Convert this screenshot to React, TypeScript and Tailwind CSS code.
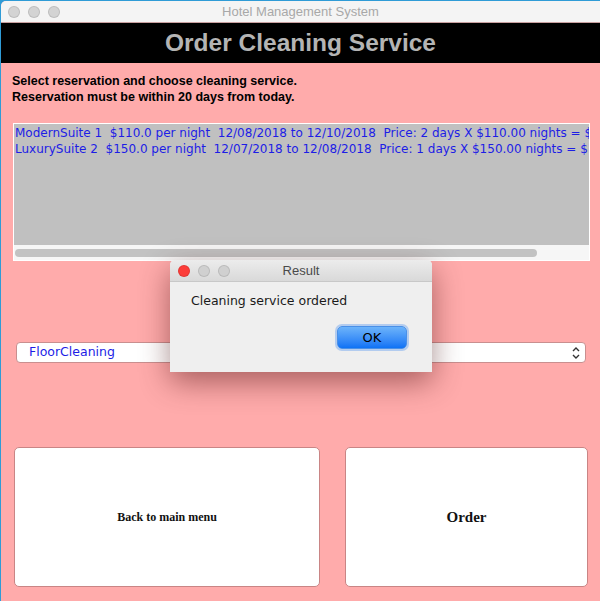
const rows = [
  "ModernSuite 1  $110.0 per night  12/08/2018 to 12/10/2018  Price: 2 days X $110.00 nights = $220.00",
  "LuxurySuite 2  $150.0 per night  12/07/2018 to 12/08/2018  Price: 1 days X $150.00 nights = $150.00",
];

const Light = ({ color }: { color: string }) => (
  <div className={`h-[12px] w-[12px] rounded-full border border-black/10 ${color}`} />
);

const App = () => {
  return (
    <div className="relative h-[601px] w-[600px] overflow-hidden bg-[#2f9bd6] pl-[1px] pt-[1px] font-['Liberation_Sans',sans-serif]">
      <div className="flex h-full flex-col overflow-hidden rounded-tl-[5px] bg-[#ffabab]">
        {/* title bar */}
        <div className="relative flex h-[22px] items-center border-b border-[#c9a0a0] bg-[#f4f4f4] px-[7px]">
          <div className="flex gap-[8px]">
            <Light color="bg-[#d3d3d3]" />
            <Light color="bg-[#d3d3d3]" />
            <Light color="bg-[#d3d3d3]" />
          </div>
          <span className="absolute left-0 right-0 text-center text-[13px] text-[#a8a8a8]">
            Hotel Management System
          </span>
        </div>
        <div className="flex h-[40px] items-center justify-center bg-black">
          <h1 className="text-[24.5px] font-bold text-[#b4b4b4]">Order Cleaning Service</h1>
        </div>

        <div className="flex flex-col px-[11px] pt-[10px]">
          <p className="text-[12.5px] font-bold leading-[16px] text-black">
            Select reservation and choose cleaning service.
            <br />
            Reservation must be within 20 days from today.
          </p>

          <div className="mt-[18px] ml-[1px] flex h-[138px] w-[577px] flex-col border border-white bg-white">
            <div className="flex-1 overflow-hidden bg-[#c0c0c0] px-[1px] pt-[1px]">
              {rows.map((r) => (
                <div key={r} className="whitespace-pre font-['DejaVu_Sans',sans-serif] text-[12px] leading-[16px] text-[#1d1de6]">
                  {r}
                </div>
              ))}
            </div>
            <div className="flex h-[15px] items-center bg-[#f6f6f6] px-[1px]">
              <div className="h-[8px] w-[522px] rounded-full bg-[#c2c2c2]" />
            </div>
          </div>

          <div className="mt-[81px] ml-[4px] flex h-[21px] w-[570px] items-center justify-between rounded-[4px] border border-[#c98f8f] bg-white pl-[12px] pr-[4px]">
            <span className="font-['DejaVu_Sans',sans-serif] text-[12.5px] text-[#1d1de6]">FloorCleaning</span>
            <svg width="10" height="14" viewBox="0 0 10 14" fill="none" stroke="#333" strokeWidth="1.4">
              <path d="M2 5 L5 2 L8 5" />
              <path d="M2 9 L5 12 L8 9" />
            </svg>
          </div>

          <div className="mt-[84px] ml-[2px] flex gap-[25px]">
            <button className="flex h-[140px] w-[306px] items-center justify-center rounded-[5px] border border-[#c98585] bg-white font-['Liberation_Serif',serif] text-[12px] font-bold text-[#111]">
              Back to main menu
            </button>
            <button className="flex h-[140px] w-[243px] items-center justify-center rounded-[5px] border border-[#c98585] bg-white font-['Liberation_Serif',serif] text-[15px] font-bold text-[#111]">
              Order
            </button>
          </div>
        </div>
      </div>

      {/* result dialog */}
      <div className="absolute left-[170px] top-[260px] flex h-[112px] w-[262px] flex-col overflow-hidden rounded-t-[5px] bg-[#efefef] shadow-[0_10px_30px_rgba(60,0,0,0.45)]">
        <div className="relative flex h-[22px] items-center border-b border-[#c8c8c8] bg-gradient-to-b from-[#ececec] to-[#d9d9d9] px-[8px]">
          <div className="flex gap-[8px]">
            <Light color="bg-[#fc3d39]" />
            <Light color="bg-[#d0d0d0]" />
            <Light color="bg-[#d0d0d0]" />
          </div>
          <span className="absolute left-0 right-0 text-center text-[13px] text-[#4a4a4a]">Result</span>
        </div>
        <p className="ml-[21px] mt-[10px] font-['DejaVu_Sans',sans-serif] text-[12.5px] text-[#1a1a1a]">Cleaning service ordered</p>
        <div className="mt-[15px] flex justify-end pr-[25px]">
          <button className="flex h-[23px] w-[70px] items-center justify-center rounded-[5px] border border-[#4a90e8] bg-gradient-to-b from-[#6cb3fa] to-[#0c72f5] font-['DejaVu_Sans',sans-serif] text-[13px] text-black shadow-[0_0_0_2px_rgba(120,170,240,0.5)]">
            OK
          </button>
        </div>
      </div>
    </div>
  );
};

export default App;
